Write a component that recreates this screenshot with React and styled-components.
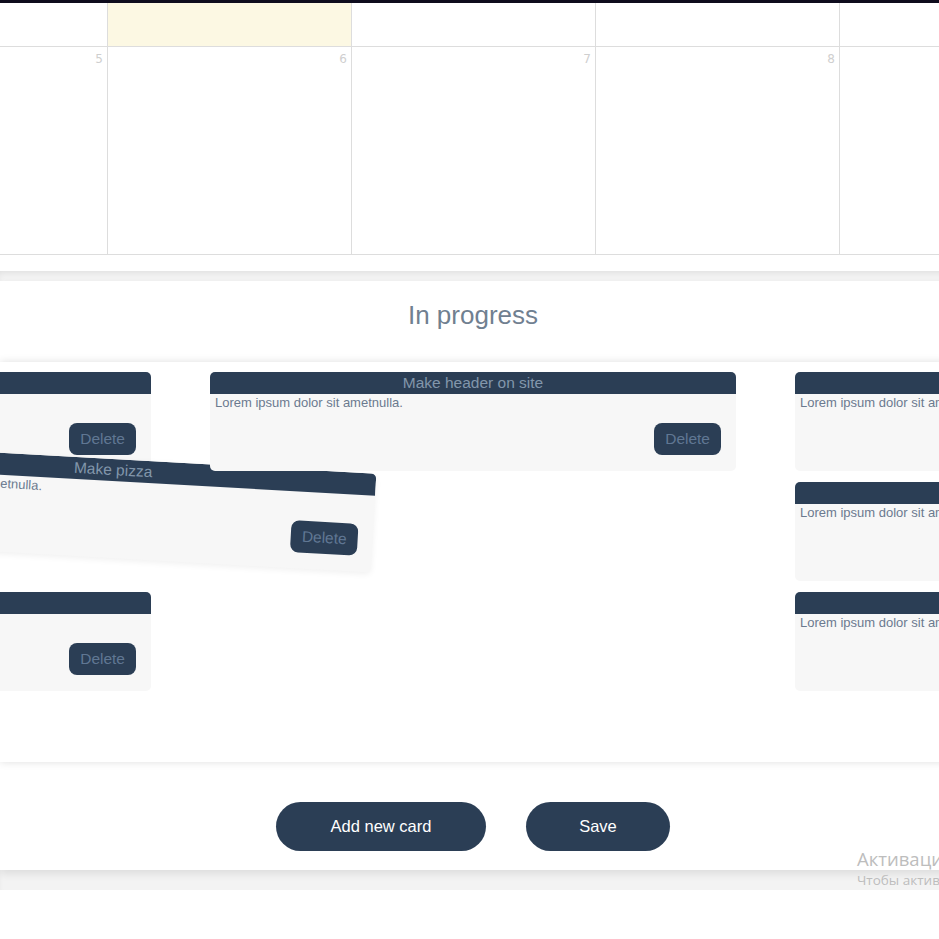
import React from 'react';
import styled, { createGlobalStyle } from 'styled-components';

const GlobalStyle = createGlobalStyle`
  html, body {
    margin: 0;
    padding: 0;
    background: #fff;
    overflow: hidden;
  }
  body {
    font-family: "Liberation Sans", Arial, sans-serif;
  }
  * {
    box-sizing: border-box;
  }
`;

const week = [4, 5, 6, 7, 8, 9, 10];
const todayIndex = 2;

const columns = [
  {
    id: 'c1',
    cards: [
      { id: 1, title: 'Write tests', text: 'Lorem ipsum dolor sit ametnulla.', del: true },
      { id: 2, placeholder: true },
      { id: 3, title: 'Fix footer', text: 'Lorem ipsum dolor sit ametnulla.', del: true },
    ],
    dragging: { id: 9, title: 'Make pizza', text: 'Lorem ipsum dolor sit ametnulla.' },
  },
  {
    id: 'c2',
    cards: [{ id: 4, title: 'Make header on site', text: 'Lorem ipsum dolor sit ametnulla.', del: true }],
  },
  {
    id: 'c3',
    cards: [
      { id: 5, title: 'Buy milk', text: 'Lorem ipsum dolor sit ametnulla.' },
      { id: 6, title: 'Call mom', text: 'Lorem ipsum dolor sit ametnulla.' },
      { id: 7, title: 'Read book', text: 'Lorem ipsum dolor sit ametnulla.' },
    ],
  },
];

const Card = ({ card, dragging }) => (
  <CardBox $dragging={dragging}>
    <CardHeader>{card.title}</CardHeader>
    <CardBody>
      <CardText>{card.text}</CardText>
      {(card.del || dragging) && <DeleteButton>Delete</DeleteButton>}
    </CardBody>
  </CardBox>
);

const App = () => {
  return (
    <Page>
      <GlobalStyle />
      <TopBar />
      <Calendar>
        <WeekRow $height={44}>
          {week.map((d, i) => (
            <DayCell key={d} $today={i === todayIndex} />
          ))}
        </WeekRow>
        <WeekRow $height={208}>
          {week.map((d) => (
            <DayCell key={d}>
              <DayNumber>{d}</DayNumber>
            </DayCell>
          ))}
        </WeekRow>
      </Calendar>

      <Wrapper>
        <Panel>
          <Title>In progress</Title>
          <Board>
            {columns.map((col) => (
              <Column key={col.id}>
                {col.cards.map((card) =>
                  card.placeholder ? <Placeholder key={card.id} /> : <Card key={card.id} card={card} />
                )}
                {col.dragging && (
                  <DragLayer>
                    <Card card={col.dragging} dragging />
                  </DragLayer>
                )}
              </Column>
            ))}
          </Board>
          <Actions>
            <PillButton $w={210}>Add new card</PillButton>
            <PillButton $w={144}>Save</PillButton>
          </Actions>
        </Panel>
      </Wrapper>

      <Watermark>
        <WatermarkTitle>Активация Windows</WatermarkTitle>
        <WatermarkText>Чтобы активировать Windows, перейдите в раздел "Параметры".</WatermarkText>
      </Watermark>
    </Page>
  );
};

// Styled Components
const Page = styled.div`
  position: relative;
  width: 946px;
  min-height: 939px;
  overflow: hidden;
`;

const TopBar = styled.div`
  height: 3px;
  background: #0e0c1d;
`;

const Calendar = styled.div`
  margin-bottom: 16px;
`;

const WeekRow = styled.div`
  display: flex;
  justify-content: center;
  height: ${(p) => p.$height}px;
  border-bottom: 1px solid #dddddd;
`;

const DayCell = styled.div`
  flex: 0 0 244px;
  position: relative;
  border-left: 1px solid #dddddd;
  background: ${(p) => (p.$today ? '#fcf8e3' : '#fff')};
`;

const DayNumber = styled.span`
  display: block;
  text-align: right;
  padding: 5px 4px 0 0;
  font-family: "DejaVu Sans", sans-serif;
  font-size: 12px;
  color: #cfcfcf;
`;

const Wrapper = styled.div`
  background: #f3f3f3;
  padding: 10px 0 20px;
  box-shadow: inset 0 4px 6px -2px rgba(0, 0, 0, 0.08);
`;

const Panel = styled.div`
  background: #fff;
  box-shadow: 0 4px 8px rgba(0, 0, 0, 0.09);
  padding: 19px 0 19px;
`;

const Title = styled.h2`
  margin: 0 0 32px;
  text-align: center;
  font-weight: 400;
  font-size: 26px;
  line-height: 30px;
  color: #708090;
`;

const Board = styled.div`
  display: flex;
  justify-content: center;
  gap: 59px;
  height: 400px;
  padding: 10px 0;
  background: #fff;
  box-shadow: 0 0 8px rgba(0, 0, 0, 0.13);
`;

const Column = styled.div`
  position: relative;
  flex: 0 0 526px;
  display: flex;
  flex-direction: column;
  gap: 11px;
`;

const CardBox = styled.div`
  width: 526px;
  height: 99px;
  display: flex;
  flex-direction: column;
  border-radius: 5px;
  overflow: hidden;
  background: #f7f7f7;
  box-shadow: ${(p) => (p.$dragging ? '0 2px 6px rgba(0,0,0,0.06)' : 'none')};
`;

const CardHeader = styled.div`
  height: 22px;
  line-height: 22px;
  background: #2b3e55;
  color: #8296ab;
  text-align: center;
  font-size: 15.5px;
`;

const CardBody = styled.div`
  flex: 1;
  display: flex;
  flex-direction: column;
  padding: 1px 15px 0 5px;
`;

const CardText = styled.p`
  margin: 0;
  font-size: 13px;
  line-height: 16px;
  color: #6b7a8f;
`;

const DeleteButton = styled.button`
  align-self: flex-end;
  margin-top: 12px;
  height: 32px;
  padding: 0 11px;
  border: none;
  border-radius: 8px;
  background: #2b3e55;
  color: #607793;
  font-family: "Liberation Sans", Arial, sans-serif;
  font-size: 15.5px;
  cursor: pointer;
`;

const Placeholder = styled.div`
  height: 99px;
`;

const DragLayer = styled.div`
  position: absolute;
  left: 0;
  top: 110px;
  transform: translate(223px, -23px) rotate(3.2deg);
`;

const Actions = styled.div`
  display: flex;
  justify-content: center;
  gap: 40px;
  padding-top: 40px;
`;

const PillButton = styled.button`
  width: ${(p) => p.$w}px;
  height: 49px;
  border: none;
  border-radius: 25px;
  background: #2b3e55;
  color: #fff;
  font-family: "Liberation Sans", Arial, sans-serif;
  font-size: 16.5px;
  cursor: pointer;
`;

const Watermark = styled.div`
  position: absolute;
  left: 857px;
  top: 846px;
  white-space: nowrap;
  color: #bdbdbd;
  font-family: "Open Sans", "Noto Sans", sans-serif;
`;

const WatermarkTitle = styled.div`
  font-size: 18.5px;
  line-height: 25px;
`;

const WatermarkText = styled.div`
  font-size: 13.5px;
  line-height: 18px;
`;

export default App;
